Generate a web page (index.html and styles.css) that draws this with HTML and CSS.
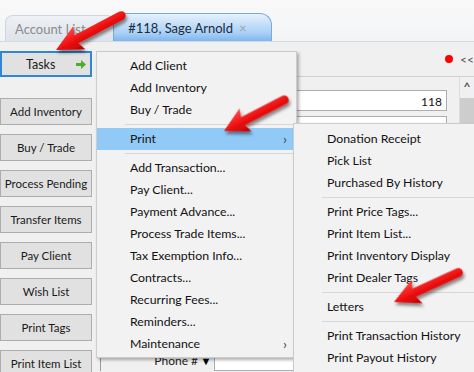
FILE: index.html
```html
<!DOCTYPE html>
<html lang="en">
<head>
    <meta charset="UTF-8">
    <meta name="viewport" content="width=device-width, initial-scale=1.0">
    <title>Account - Sage Arnold</title>
    <link rel="stylesheet" href="styles.css">
</head>
<body>
    <div class="window">
        <div class="tabstrip">
            <div class="tab">Account List <span class="tab-close">&times;</span></div>
            <div class="tab active">#118, Sage Arnold <span class="tab-close">&times;</span></div>
        </div>

        <div class="workspace">
            <div class="sidebar">
                <button class="side-btn tasks">
                    <span>Tasks</span>
                    <svg width="10" height="9" viewBox="0 0 10 9"><path d="M0 3h5V0l5 4.5L5 9V6H0z" fill="#4cae2a"/></svg>
                </button>
                <button class="side-btn">Add Inventory</button>
                <button class="side-btn">Buy / Trade</button>
                <button class="side-btn">Process Pending</button>
                <button class="side-btn">Transfer Items</button>
                <button class="side-btn">Pay Client</button>
                <button class="side-btn">Wish List</button>
                <button class="side-btn">Print Tags</button>
                <button class="side-btn">Print Item List</button>
            </div>

            <div class="main">
                <div class="toolbar">
                    <span class="status-dot"></span>
                    <span class="collapse">&lt;&lt;</span>
                </div>
                <div class="group">
                    <!-- rows hidden behind the open menu keep empty labels -->
                    <div class="fields">
                        <div class="field"><label></label><span class="mark"></span><div class="input num">118</div></div>
                        <div class="field"><label></label><span class="mark"></span><div class="input"></div></div>
                        <div class="field"><label></label><span class="mark"></span><div class="input"></div></div>
                        <div class="field"><label></label><span class="mark"></span><div class="input"></div></div>
                        <div class="field"><label></label><span class="mark"></span><div class="input"></div></div>
                        <div class="field"><label></label><span class="mark"></span><div class="input"></div></div>
                        <div class="field"><label></label><span class="mark"></span><div class="input"></div></div>
                        <div class="field"><label></label><span class="mark"></span><div class="input"></div></div>
                        <div class="field"><label></label><span class="mark"></span><div class="input"></div></div>
                        <div class="field"><label></label><span class="mark"></span><div class="input"></div></div>
                        <div class="field"><label>Phone #</label><span class="mark">&#9660;</span><div class="input"></div></div>
                    </div>
                    <div class="scrollbar">
                        <span class="scroll-up">^</span>
                        <span class="scroll-thumb"></span>
                    </div>
                </div>
            </div>
        </div>

        <div class="menu main-menu">
            <div class="menu-item">Add Client</div>
            <div class="menu-item">Add Inventory</div>
            <div class="menu-item">Buy / Trade</div>
            <div class="menu-sep"></div>
            <div class="menu-item selected">Print <span class="sub-arrow">&rsaquo;</span></div>
            <div class="menu-sep"></div>
            <div class="menu-item">Add Transaction...</div>
            <div class="menu-item">Pay Client...</div>
            <div class="menu-item">Payment Advance...</div>
            <div class="menu-item">Process Trade Items...</div>
            <div class="menu-item">Tax Exemption Info...</div>
            <div class="menu-item">Contracts...</div>
            <div class="menu-item">Recurring Fees...</div>
            <div class="menu-item">Reminders...</div>
            <div class="menu-item">Maintenance <span class="sub-arrow">&rsaquo;</span></div>
        </div>

        <div class="menu sub-menu">
            <div class="menu-item">Donation Receipt</div>
            <div class="menu-item">Pick List</div>
            <div class="menu-item">Purchased By History</div>
            <div class="menu-sep"></div>
            <div class="menu-item">Print Price Tags...</div>
            <div class="menu-item">Print Item List...</div>
            <div class="menu-item">Print Inventory Display</div>
            <div class="menu-item">Print Dealer Tags</div>
            <div class="menu-sep"></div>
            <div class="menu-item">Letters</div>
            <div class="menu-sep"></div>
            <div class="menu-item">Print Transaction History</div>
            <div class="menu-item">Print Payout History</div>
        </div>

        <!-- callout arrows drawn over the screenshot -->
        <svg class="callouts" width="474" height="372" viewBox="0 0 474 372">
            <defs>
                <linearGradient id="redFill" x1="0" y1="0" x2="0" y2="1">
                    <stop offset="0" stop-color="#ff4a4a"/>
                    <stop offset="0.5" stop-color="#ee1111"/>
                    <stop offset="1" stop-color="#b80000"/>
                </linearGradient>
                <filter id="shade" x="-20%" y="-20%" width="150%" height="160%">
                    <feDropShadow dx="1.5" dy="3" stdDeviation="1.6" flood-color="#000" flood-opacity="0.45"/>
                </filter>
                <path id="arrow" d="M0 0 L25 -13 L22 -4.5 L70 -4.5 A4.5 4.5 0 0 1 70 4.5 L22 4.5 L25 13 Z"/>
            </defs>
            <g filter="url(#shade)" fill="url(#redFill)">
                <use href="#arrow" transform="translate(56 50) rotate(-27.8) scale(1.05 1)"/>
                <use href="#arrow" transform="translate(224 131) rotate(-27.3) scale(0.97 1)"/>
                <use href="#arrow" transform="translate(394 302) rotate(-24.6) scale(1.01 1)"/>
            </g>
        </svg>
    </div>
</body>
</html>
```

FILE: styles.css
```css
body {
    margin: 0;
    background: #f0f0f0;
    font-family: Lato, "Liberation Sans", sans-serif;
    color: #111;
}
.window {
    position: relative;
    width: 474px;
    height: 372px;
    overflow: hidden;
}
.tabstrip {
    height: 42px;
    box-sizing: border-box;
    padding: 15px 0 0 5px;
    display: flex;
    align-items: flex-end;
    background: linear-gradient(#f9f9f9, #f2f4f6);
    border-bottom: 1px solid #d6d9dd;
}
.tab {
    height: 25px;
    padding: 0 15px 0 9px;
    display: flex;
    align-items: center;
    gap: 6px;
    font-size: 13px;
    color: #8a8a8a;
    background: linear-gradient(#eef1f5, #dde3ea);
    border: 1px solid #cfd6de;
    border-bottom: none;
    border-radius: 8px 8px 0 0;
}
.tab.active {
    height: 27px;
    margin-left: -2px;
    padding: 0 24px 0 14px;
    color: #1c2b3c;
    background: linear-gradient(#e6f1fc, #a9d0f6 70%, #7fb6ef);
    border-color: #7ca9d8;
    border-radius: 10px 12px 0 0;
}
.tab-close {
    color: #9aa3ad;
    font-size: 13px;
}
.workspace {
    display: flex;
    height: 329px;
}
.sidebar {
    width: 92px;
    flex-shrink: 0;
    padding-top: 9px;
    display: flex;
    flex-direction: column;
    gap: 9px;
}
.side-btn {
    height: 27px;
    padding: 0;
    font-family: Lato, "Liberation Sans", sans-serif;
    font-size: 11.5px;
    color: #1a1a1a;
    background: #e1e1e1;
    border: 1px solid #adadad;
    flex-shrink: 0;
}
.side-btn.tasks {
    height: 26px;
    margin-bottom: 12px;
    border: 2px solid #2f86d4;
    display: flex;
    align-items: center;
    justify-content: space-between;
    padding: 0 4px 0 24px;
    font-size: 12.5px;
}
.main {
    flex: 1;
    padding-left: 8px;
    display: flex;
    flex-direction: column;
}
.toolbar {
    height: 39px;
    display: flex;
    align-items: center;
    justify-content: flex-end;
    gap: 7px;
}
.status-dot {
    width: 8px;
    height: 8px;
    border-radius: 50%;
    background: #f00;
}
.collapse {
    font-size: 12px;
    color: #555;
    width: 14px;
    overflow: hidden;
    white-space: nowrap;
}
.group {
    flex: 1;
    display: flex;
    border-top: 1px solid #d0d0d0;
    border-left: 1px solid #9a9a9a;
}
.fields {
    flex: 1;
    padding: 13px 12px 0 0;
    display: flex;
    flex-direction: column;
    gap: 5px;
}
.field {
    display: flex;
    align-items: center;
    height: 21px;
}
.field label {
    width: 97px;
    text-align: right;
    font-size: 12px;
    color: #222;
}
.mark {
    width: 16px;
    text-align: center;
    font-size: 11px;
    color: #000;
}
.input {
    flex: 1;
    height: 100%;
    box-sizing: border-box;
    background: #fff;
    border: 1px solid #abadb3;
    font-size: 12px;
    padding: 3px 4px;
}
.input.num {
    text-align: right;
}
.scrollbar {
    width: 14px;
    border-left: 1px solid #dcdcdc;
    display: flex;
    flex-direction: column;
}
.scroll-up {
    height: 21px;
    text-align: center;
    font-size: 12px;
    font-weight: bold;
    color: #555;
    line-height: 20px;
}
.scroll-thumb {
    flex: 1;
    background: #cdcdcd;
}
.menu {
    position: absolute;
    box-sizing: border-box;
    background: #f2f2f2;
    border: 1px solid #cccccc;
    box-shadow: 2px 2px 3px rgba(0, 0, 0, 0.3);
    font-size: 12.3px;
}
.main-menu {
    left: 96px;
    top: 51px;
    width: 201px;
    padding: 3px 3px 2px 0;
}
.sub-menu {
    left: 293px;
    top: 123px;
    width: 200px;
    height: 260px;
    padding: 4px 0 0 0;
}
.menu-item {
    height: 22px;
    line-height: 22px;
    padding-left: 33px;
    position: relative;
    white-space: nowrap;
}
.menu-item.selected {
    background: #91c9f7;
}
.sub-arrow {
    position: absolute;
    right: 6px;
    top: 0;
    color: #444;
    font-size: 14px;
}
.menu-sep {
    height: 1px;
    margin: 3px 0 3px 28px;
    background: #d7d7d7;
}
.callouts {
    position: absolute;
    left: 0;
    top: 0;
    pointer-events: none;
}
```
